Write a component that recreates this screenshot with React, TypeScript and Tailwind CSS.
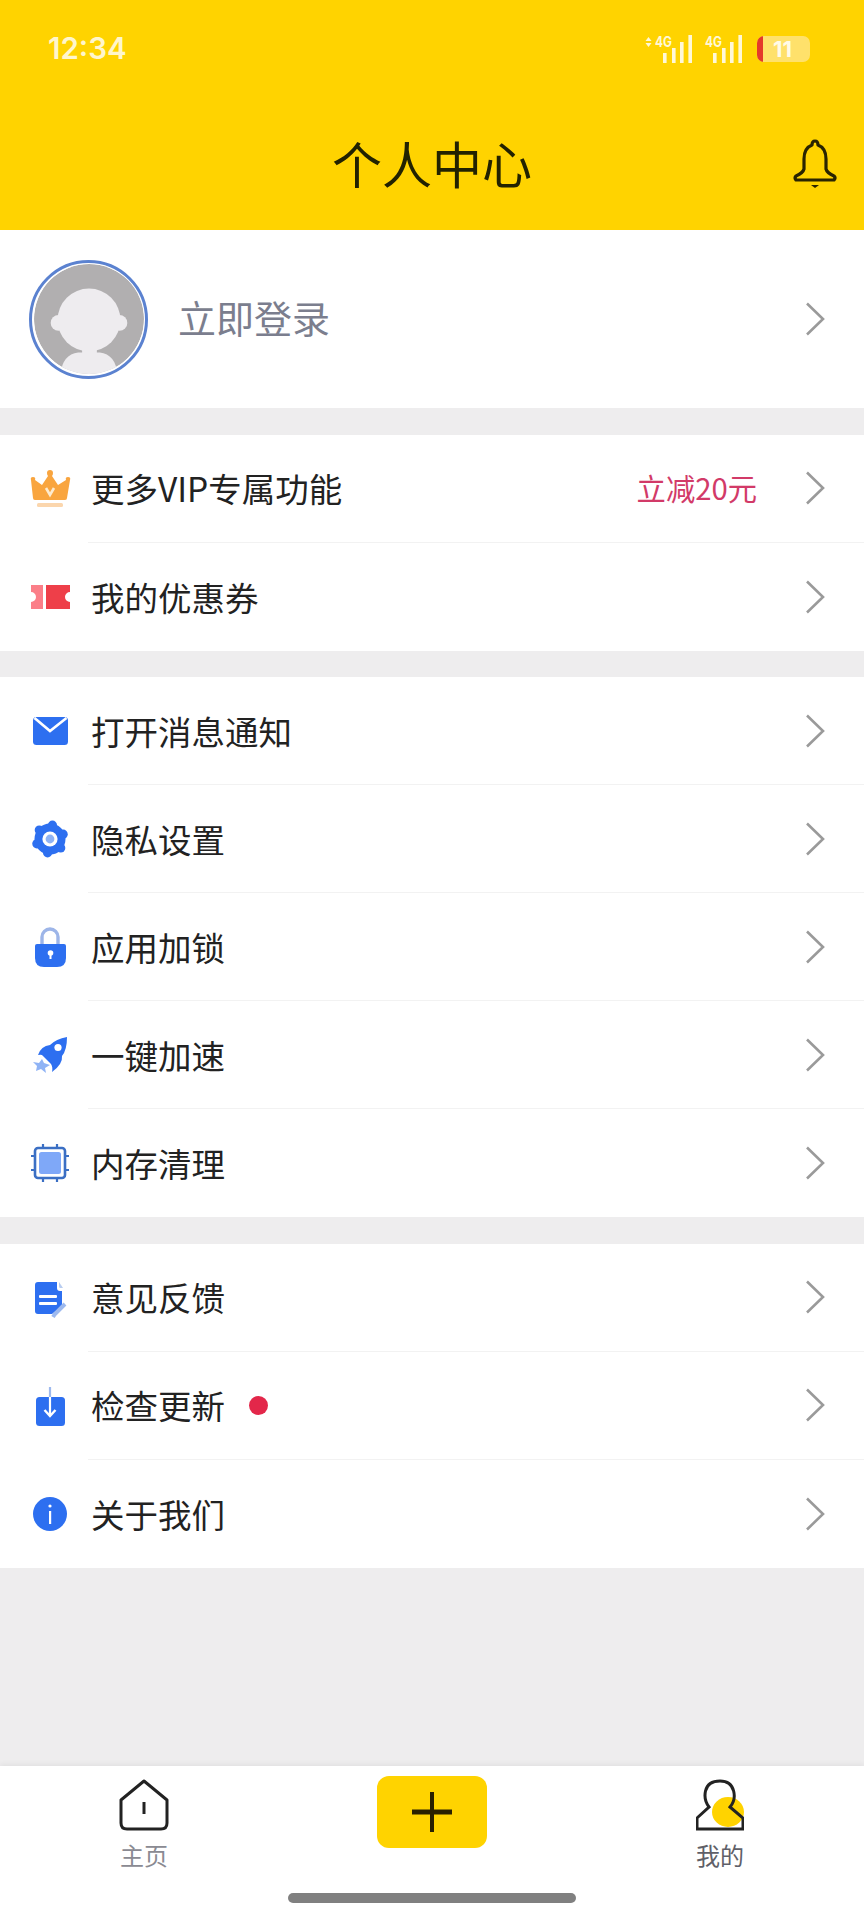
const CJK = "font-['Noto_Sans_CJK_SC','Noto_Sans',sans-serif]";

function Chevron() {
  return (
    <svg width="20" height="34" viewBox="0 0 20 34" fill="none" className="shrink-0">
      <path d="M2 1.5 L18 17 L2 32.5" stroke="#9a9a9a" strokeWidth="2.6" />
    </svg>
  );
}

function Box({ children }: { children: React.ReactNode }) {
  return (
    <svg width="44" height="44" viewBox="0 0 44 44" fill="none">
      {children}
    </svg>
  );
}

const Crown = () => (
  <Box>
    <path
      d="M22 3 Q25 3 25 6 Q25 8 24 9 L30 18 L38 13 Q37 10 40 10 Q43 10 42 13 L39 31 Q39 33 37 33 H7 Q5 33 5 31 L3 13 Q2 10 5 10 Q8 10 7 13 L14 18 L20 9 Q19 8 19 6 Q19 3 22 3 Z"
      fill="#f9a53f"
    />
    <path d="M18 21 L22 28 L26 21" stroke="#fdebd0" strokeWidth="2.6" />
    <rect x="9" y="36" width="26" height="4" rx="1.5" fill="#fbd6ad" />
  </Box>
);

const Ticket = () => (
  <Box>
    <path d="M3 10 H15 V34 H3 V27 A5 5 0 0 0 3 17 Z" fill="#fb7e88" />
    <path d="M18 10 H42 V17 A5 5 0 0 0 42 27 V34 H18 Z" fill="#ee3f49" />
  </Box>
);

const Mail = () => (
  <Box>
    <rect x="5" y="8" width="35" height="28" rx="3.5" fill="#2d6ff0" />
    <path d="M6.5 9 L22 22 L38.5 9" stroke="#fff" strokeWidth="2.6" />
  </Box>
);

const Gear = () => {
  const lobes = [0, 1, 2, 3, 4, 5].map((k) => {
    const a = ((-80 + 60 * k) * Math.PI) / 180;
    return [22 + 14 * Math.cos(a), 22 + 14 * Math.sin(a)];
  });
  return (
    <Box>
      <circle cx="22" cy="22" r="15.5" fill="#2d6ff0" />
      {lobes.map(([x, y], i) => (
        <circle key={i} cx={x} cy={y} r="4.6" fill="#2d6ff0" />
      ))}
      <circle cx="22" cy="22" r="7.6" fill="#fff" />
      <circle cx="22" cy="22" r="4.4" fill="#8fb3f5" />
    </Box>
  );
};

const Lock = () => (
  <Box>
    <path d="M14 20 V12 A8 8 0 0 1 30 12 V20" stroke="#9db5e8" strokeWidth="3.4" />
    <path d="M9 19 H36 Q38 19 38 21 V33 Q38 42 29 42 H16 Q7 42 7 33 V21 Q7 19 9 19 Z" fill="#2d6ff0" />
    <circle cx="22.5" cy="28" r="2.8" fill="#fff" />
    <rect x="21.5" y="29" width="2" height="5" fill="#fff" />
  </Box>
);

const Rocket = () => (
  <Box>
    <path d="M39 4 Q39 17 34 23 Q35 31 24 39 Q25 34 23 31 L15 23 Q14 21 10 22 Q13 13 22 12 Q28 6 39 4 Z" fill="#2d6ff0" />
    <circle cx="30" cy="14.5" r="3.6" fill="#fff" />
    <path d="M14 26 L16 30 L22 32 L17 35 L18 40 L13 36 L8 38 L9 33 L5 29 L11 30 Z" fill="#8fb3f5" />
  </Box>
);

const Chip = () => (
  <Box>
    <rect x="7" y="7" width="30" height="30" rx="3" fill="#fff" stroke="#3b6fc4" strokeWidth="2.6" />
    <rect x="11" y="11" width="22" height="22" rx="2.5" fill="#7fa8f8" />
    <path
      d="M15 3 V7 M29 3 V7 M15 37 V41 M29 37 V41 M3 15 H7 M3 29 H7 M37 15 H41 M37 29 H41"
      stroke="#3b6fc4"
      strokeWidth="2.2"
    />
  </Box>
);

const Doc = () => (
  <Box>
    <path d="M10 6 H29 V12 Q29 15 32 15 H34 V30 L24 38 H10 Q7 38 7 35 V9 Q7 6 10 6 Z" fill="#2d6ff0" />
    <path d="M31 6 L35 12 H32 Q31 12 31 10 Z" fill="#b9cdf0" />
    <rect x="11" y="19" width="18" height="3" rx="1" fill="#fff" />
    <rect x="11" y="26" width="18" height="3" rx="1" fill="#fff" />
    <path d="M37 28 L27 38 L25 41" stroke="#9db9ee" strokeWidth="4" />
  </Box>
);

const Download = () => (
  <Box>
    <rect x="8" y="13" width="29" height="29" rx="3.5" fill="#2d6ff0" />
    <path d="M22 3 V13" stroke="#9db9ee" strokeWidth="2.2" />
    <path d="M22 13 V31" stroke="#fff" strokeWidth="2.2" />
    <path d="M16.5 26 L22 32 L27.5 26" stroke="#fff" strokeWidth="2.4" />
  </Box>
);

const Info = () => (
  <Box>
    <circle cx="22" cy="22" r="17" fill="#2d6ff0" />
    <rect x="21" y="19" width="2.2" height="13" fill="#fff" />
    <circle cx="22" cy="14" r="1.6" fill="#fff" />
  </Box>
);

type RowData = { label: string; icon: React.ReactNode; extra?: string; dot?: boolean };

const sections: RowData[][] = [
  [
    { label: "更多VIP专属功能", icon: <Crown />, extra: "立减20元" },
    { label: "我的优惠券", icon: <Ticket /> },
  ],
  [
    { label: "打开消息通知", icon: <Mail /> },
    { label: "隐私设置", icon: <Gear /> },
    { label: "应用加锁", icon: <Lock /> },
    { label: "一键加速", icon: <Rocket /> },
    { label: "内存清理", icon: <Chip /> },
  ],
  [
    { label: "意见反馈", icon: <Doc /> },
    { label: "检查更新", icon: <Download />, dot: true },
    { label: "关于我们", icon: <Info /> },
  ],
];

function Row({ row, last }: { row: RowData; last: boolean }) {
  return (
    <div className="flex h-[108px] items-stretch">
      <div className="flex w-[88px] shrink-0 items-center pl-[28px]">{row.icon}</div>
      <div className={`flex flex-1 items-center pl-[3px] pr-[39px] ${last ? "" : "border-b border-[#f2f2f2]"}`}>
        <span className="text-[33.5px] leading-none text-[#222222]">{row.label}</span>
        {row.dot && <span className="ml-[24px] h-[19px] w-[19px] rounded-full bg-[#e3274a]" />}
        <span className="flex-1" />
        {row.extra && <span className="mr-[48px] text-[29.3px] leading-none text-[#d23a68]">{row.extra}</span>}
        <Chevron />
      </div>
    </div>
  );
}

function Signal({ arrows }: { arrows?: boolean }) {
  return (
    <svg width={arrows ? 47 : 38} height="40" viewBox={arrows ? "0 -6 47 40" : "9 -6 38 40"} fill="#fff8d8">
      {arrows && <path d="M3.5 2 L6.5 6 H0.5 Z M0.5 8 H6.5 L3.5 12 Z" />}
      <text x="10" y="12" fontSize="14" fontWeight="700" fontFamily="Inter, sans-serif" textLength="17" lengthAdjust="spacingAndGlyphs">4G</text>
      <rect x="18" y="18" width="3.6" height="10" />
      <rect x="27" y="13" width="3.6" height="15" />
      <rect x="35" y="7" width="3.6" height="21" />
      <rect x="43.4" y="0" width="3.6" height="28" />
    </svg>
  );
}

export default function App() {
  return (
    <div className={`flex h-[1920px] w-[864px] flex-col overflow-hidden bg-[#eeedee] ${CJK}`}>
      <header className="h-[230px] shrink-0 bg-[#ffd300]">
        <div className="flex h-[98px] items-center justify-between pl-[48px] pr-[54px]">
          <span className="font-['Inter',sans-serif] text-[29.5px] font-semibold leading-none text-[#fff6cc]">12:34</span>
          <div className="flex items-center gap-[12px]">
            <Signal arrows />
            <Signal />
            <div className="relative ml-[3px] flex h-[26px] w-[53px] items-center overflow-hidden rounded-[7px] bg-[#ffe16b]">
              <span className="h-full w-[6px] bg-[#e5392a]" />
              <span className="ml-[10px] font-['Inter',sans-serif] text-[22px] font-bold leading-none text-[#fffbe8]">11</span>
            </div>
          </div>
        </div>
        <div className="grid h-[128px] grid-cols-[1fr_auto_1fr] items-center">
          <span />
          <h1 className="text-[50px] font-normal leading-none text-[#222200]">个人中心</h1>
          <div className="flex justify-end pr-[25px] pt-[4px]">
            <svg width="46" height="50" viewBox="0 0 46 50" fill="none" stroke="#2a2400" strokeWidth="3.2">
              <path
                d="M22 2 Q19 2 19 6 Q11 9 11 20 V30 Q10 34 3 37 Q1 39 3 41 H41 Q43 39 41 37 Q34 34 33 30 V20 Q33 9 25 6 Q25 2 22 2 Z"
                strokeLinejoin="round"
              />
              <path d="M18 46 H26 L22 49 Z" fill="#2a2400" stroke="none" />
            </svg>
          </div>
        </div>
      </header>

      <main className="flex-1">
        <div className="flex h-[178px] items-center bg-white pl-[29px] pr-[39px]">
          <div className="h-[119px] w-[119px] shrink-0 rounded-full border-[3px] border-[#5b82d0] bg-white p-[1.5px]">
            <svg viewBox="0 0 112 112" className="block h-full w-full rounded-full">
              <circle cx="56" cy="56" r="56" fill="#b1afb0" />
              <circle cx="56" cy="57" r="32" fill="#eeecef" />
              <circle cx="25" cy="60" r="8" fill="#eeecef" />
              <circle cx="87" cy="60" r="8" fill="#eeecef" />
              <rect x="49" y="82" width="15" height="12" fill="#eeecef" />
              <path d="M27 112 Q29 92 45 90 H67 Q83 92 85 112 Z" fill="#eeecef" />
            </svg>
          </div>
          <span className="ml-[30px] flex-1 pb-[4px] text-[38px] leading-none text-[#7b7e8e]">立即登录</span>
          <Chevron />
        </div>

        {sections.map((rows, i) => (
          <section key={i} className="mt-[26.5px] bg-white">
            {rows.map((row, j) => (
              <Row key={row.label} row={row} last={j === rows.length - 1} />
            ))}
          </section>
        ))}
      </main>

      <nav className="relative h-[154px] shrink-0 bg-white pt-[10px] shadow-[0_-2px_5px_rgba(0,0,0,0.05)]">
        <div className="grid h-[117px] grid-cols-3">
          <div className="flex flex-col items-center pt-[3px]">
            <svg width="50" height="52" viewBox="0 0 50 52" fill="none" stroke="#222" strokeWidth="3">
              <path d="M25 2 L48 21 V44 Q48 50 42 50 H8 Q2 50 2 44 V21 Z" strokeLinejoin="round" />
              <path d="M25 23 V35" />
            </svg>
            <span className="mt-[7px] text-[24px] leading-[34px] text-[#8a8a92]">主页</span>
          </div>
          <div className="flex justify-center">
            <div className="flex h-[72px] w-[110px] items-center justify-center rounded-[12px] bg-[#ffd300]">
              <svg width="40" height="40" viewBox="0 0 40 40">
                <rect x="18" y="0" width="4" height="40" fill="#2a2000" />
                <rect x="0" y="17.5" width="40" height="5" fill="#2a2000" />
              </svg>
            </div>
          </div>
          <div className="flex flex-col items-center pt-[3px]">
            <svg width="48" height="52" viewBox="0 0 48 52" fill="none">
              <ellipse cx="32" cy="33" rx="16" ry="15" fill="#ffd300" />
              <path
                d="M13 28 C7 20 6 2 24 2 C40 2 41 20 34 28 L47 39 V50 H1 V39 Z"
                stroke="#222"
                strokeWidth="3"
              />
            </svg>
            <span className="mt-[7px] text-[24px] leading-[34px] text-[#5f5f68]">我的</span>
          </div>
        </div>
        <div className="mx-auto h-[10px] w-[288px] rounded-full bg-[#808080]" />
      </nav>
    </div>
  );
}
